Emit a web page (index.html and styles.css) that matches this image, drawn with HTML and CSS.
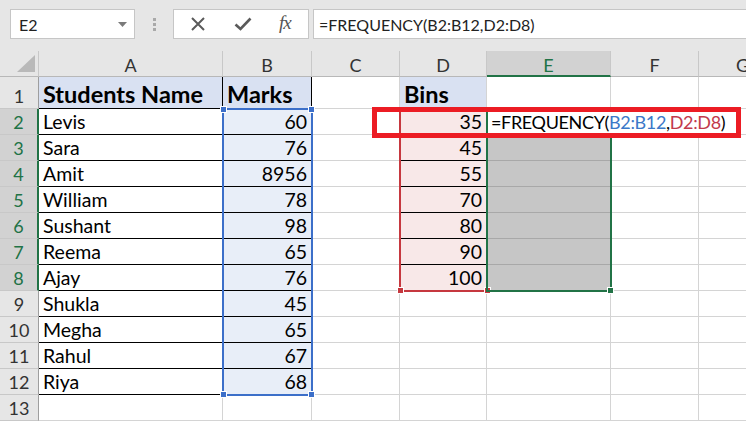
FILE: index.html
```html
<!DOCTYPE html>
<html>
<head>
<meta charset="utf-8">
<link rel="stylesheet" href="styles.css">
</head>
<body>
<div class="app">
  <div class="toolbar">
    <div class="namebox">
      <span class="nb-text">E2</span>
      <svg class="nb-arrow" width="9" height="5" viewBox="0 0 9 5"><path d="M0 0H9L4.5 5Z" fill="#7a7a7a"/></svg>
    </div>
    <div class="grip"><i></i><i></i><i></i></div>
    <div class="fxbox">
      <svg class="ico" width="16" height="16" viewBox="0 0 16 16"><path d="M2 2L14 14M14 2L2 14" stroke="#5a5a5a" stroke-width="2" fill="none"/></svg>
      <svg class="ico" width="18" height="14" viewBox="0 0 18 14"><path d="M1.5 7.5L6.5 12L16.5 1.5" stroke="#5a5a5a" stroke-width="2.6" fill="none"/></svg>
      <span class="fx">fx</span>
    </div>
    <div class="formula">=FREQUENCY(B2:B12,D2:D8)</div>
  </div>

  <div class="sheet">
    <div class="grid">
      <!-- header row -->
      <div class="corner"><svg width="18" height="17" viewBox="0 0 18 17"><path d="M18 0V17H0Z" fill="#b9b9b9"/></svg></div>
      <div class="ch">A</div>
      <div class="ch">B</div>
      <div class="ch">C</div>
      <div class="ch">D</div>
      <div class="ch sel">E</div>
      <div class="ch">F</div>
      <div class="ch">G</div>

      <!-- row 1 -->
      <div class="rh">1</div>
      <div class="c t hd">Students Name</div>
      <div class="c t hd">Marks</div>
      <div class="c"></div>
      <div class="c hd">Bins</div>
      <div class="c"></div>
      <div class="c"></div>
      <div class="c"></div>

      <!-- row 2 -->
      <div class="rh sel">2</div>
      <div class="c t">Levis</div>
      <div class="c t bb n">60</div>
      <div class="c"></div>
      <div class="c t rr n">35</div>
      <div class="c edit"><span class="edit-text">=FREQUENCY(<span class="ref-b">B2:B12</span>,<span class="ref-d">D2:D8</span>)</span><span class="caret"></span></div>
      <div class="c nogrid"></div>
      <div class="c"></div>

      <!-- row 3 -->
      <div class="rh sel">3</div>
      <div class="c t">Sara</div>
      <div class="c t bb n">76</div>
      <div class="c"></div>
      <div class="c t rr n">45</div>
      <div class="c gs"></div>
      <div class="c"></div>
      <div class="c"></div>

      <!-- row 4 -->
      <div class="rh sel">4</div>
      <div class="c t">Amit</div>
      <div class="c t bb n">8956</div>
      <div class="c"></div>
      <div class="c t rr n">55</div>
      <div class="c gs"></div>
      <div class="c"></div>
      <div class="c"></div>

      <!-- row 5 -->
      <div class="rh sel">5</div>
      <div class="c t">William</div>
      <div class="c t bb n">78</div>
      <div class="c"></div>
      <div class="c t rr n">70</div>
      <div class="c gs"></div>
      <div class="c"></div>
      <div class="c"></div>

      <!-- row 6 -->
      <div class="rh sel">6</div>
      <div class="c t">Sushant</div>
      <div class="c t bb n">98</div>
      <div class="c"></div>
      <div class="c t rr n">80</div>
      <div class="c gs"></div>
      <div class="c"></div>
      <div class="c"></div>

      <!-- row 7 -->
      <div class="rh sel">7</div>
      <div class="c t">Reema</div>
      <div class="c t bb n">65</div>
      <div class="c"></div>
      <div class="c t rr n">90</div>
      <div class="c gs"></div>
      <div class="c"></div>
      <div class="c"></div>

      <!-- row 8 -->
      <div class="rh sel">8</div>
      <div class="c t">Ajay</div>
      <div class="c t bb n">76</div>
      <div class="c"></div>
      <div class="c t rr n">100</div>
      <div class="c gs"></div>
      <div class="c"></div>
      <div class="c"></div>

      <!-- row 9 -->
      <div class="rh">9</div>
      <div class="c t">Shukla</div>
      <div class="c t bb n">45</div>
      <div class="c"></div>
      <div class="c"></div>
      <div class="c"></div>
      <div class="c"></div>
      <div class="c"></div>

      <!-- row 10 -->
      <div class="rh">10</div>
      <div class="c t">Megha</div>
      <div class="c t bb n">65</div>
      <div class="c"></div>
      <div class="c"></div>
      <div class="c"></div>
      <div class="c"></div>
      <div class="c"></div>

      <!-- row 11 -->
      <div class="rh">11</div>
      <div class="c t">Rahul</div>
      <div class="c t bb n">67</div>
      <div class="c"></div>
      <div class="c"></div>
      <div class="c"></div>
      <div class="c"></div>
      <div class="c"></div>

      <!-- row 12 -->
      <div class="rh">12</div>
      <div class="c t">Riya</div>
      <div class="c t bb n">68</div>
      <div class="c"></div>
      <div class="c"></div>
      <div class="c"></div>
      <div class="c"></div>
      <div class="c"></div>

      <!-- row 13 -->
      <div class="rh">13</div>
      <div class="c"></div>
      <div class="c"></div>
      <div class="c"></div>
      <div class="c"></div>
      <div class="c"></div>
      <div class="c"></div>
      <div class="c"></div>
    </div>

    <!-- range highlight overlays -->
    <div class="range range-blue">
      <i class="h tl"></i><i class="h tr"></i><i class="h bl"></i><i class="h br"></i>
    </div>
    <div class="range range-red">
      <i class="h bl"></i><i class="h br"></i>
    </div>
    <div class="range range-green">
      <i class="h br"></i>
    </div>
    <div class="callout"></div>
  </div>
</div>
</body>
</html>
```

FILE: styles.css
```css
* { box-sizing: border-box; }

html, body {
  margin: 0;
  padding: 0;
  background: #ffffff;
}

body {
  width: 746px;
  height: 422px;
  overflow: hidden;
  font-family: "Lato", "Open Sans", sans-serif;
  color: #000;
}

.app {
  width: 746px;
  height: 422px;
  display: flex;
  flex-direction: column;
  overflow: hidden;
}

/* ---------- toolbar ---------- */
.toolbar {
  height: 51px;
  flex: none;
  background: #e6e6e6;
  display: flex;
  align-items: flex-start;
  padding-top: 9px;
  padding-left: 10px;
}

.namebox {
  width: 125px;
  height: 30px;
  background: #fff;
  border: 1px solid #c6c6c6;
  display: flex;
  align-items: center;
  justify-content: space-between;
  padding: 0 7px 0 8px;
}

.nb-text {
  font-size: 16px;
  color: #222;
}

.grip {
  width: 38px;
  height: 30px;
  display: flex;
  flex-direction: column;
  align-items: center;
  justify-content: center;
  gap: 2px;
}
.grip i {
  display: block;
  width: 3px;
  height: 3px;
  background: #a9a9a9;
}

.fxbox {
  width: 136px;
  height: 30px;
  background: #fff;
  border: 1px solid #c6c6c6;
  display: flex;
  align-items: center;
  padding-left: 16px;
}
.fxbox .ico:first-child { margin-right: 28px; }
.fxbox .ico:nth-child(2) { margin-right: 27px; }

.fx {
  font-family: "Liberation Serif", serif;
  font-style: italic;
  font-size: 19px;
  color: #555;
  letter-spacing: -1px;
  margin-top: -3px;
}

.formula {
  margin-left: 4px;
  flex: 1;
  height: 30px;
  background: #fff;
  border: 1px solid #c6c6c6;
  border-right: none;
  padding-left: 5px;
  display: flex;
  align-items: center;
  font-size: 16px;
  color: #222;
}

/* ---------- sheet ---------- */
.sheet {
  position: relative;
  flex: 1;
  overflow: hidden;
}

.grid {
  display: grid;
  grid-template-columns: 39px 184px 89px 88px 87px 124px 88px 88px;
  grid-template-rows: 26px 32px repeat(12, 26px);
  width: 787px;
}

.corner {
  background: #e6e6e6;
  border-right: 1px solid #c8c8c8;
  border-bottom: 1px solid #b8b8b8;
  display: flex;
  align-items: flex-end;
  justify-content: flex-end;
  padding: 0 3px 4px 0;
}

.ch {
  background: #e6e6e6;
  border-right: 1px solid #c8c8c8;
  border-bottom: 1px solid #b8b8b8;
  display: flex;
  align-items: center;
  justify-content: center;
  font-size: 18px;
  color: #333;
  padding-top: 3px;
}
.ch.sel {
  background: #d2d2d2;
  color: #217346;
  border-bottom: 2px solid #217346;
}

.rh {
  background: #e6e6e6;
  border-right: 1px solid #9e9e9e;
  border-bottom: 1px solid #c8c8c8;
  display: flex;
  align-items: flex-end;
  justify-content: center;
  font-size: 18px;
  color: #333;
  padding-bottom: 1px;
}
.rh.sel {
  background: #d2d2d2;
  color: #217346;
  border-right: 2px solid #217346;
}

.c {
  border-right: 1px solid #d4d4d4;
  border-bottom: 1px solid #d4d4d4;
  display: flex;
  align-items: flex-end;
  padding: 0 4px 1px 4px;
  font-size: 19.5px;
  white-space: nowrap;
  line-height: 22px;
}

.t {
  border-right-color: #000;
  border-bottom-color: #000;
}
.hd {
  background: #d9e1f2;
  font-weight: 700;
  font-size: 23.5px;
  line-height: 28px;
  padding-bottom: 0;
}
.bb { background: #e8eef8; }
.rr { background: #f8e8e8; }
.gs {
  background: #c6c6c6;
  border-bottom-color: #a8a8a8;
  border-right-color: #a8a8a8;
}
.n { justify-content: flex-end; }
.nogrid { border-right-color: #fff; }

.edit {
  position: relative;
  overflow: visible;
  border-right-color: #fff;
  z-index: 2;
  font-size: 18px;
}
.edit-text {
  position: relative;
  background: #fff;
  padding-right: 3px;
  letter-spacing: -0.35px;
}
.ref-b { color: #3b78c8; }
.ref-d { color: #c23a4c; }
.caret {
  display: inline-block;
  width: 1px;
  height: 20px;
  background: #000;
  margin-bottom: 1px;
}

/* ---------- overlays ---------- */
.range {
  position: absolute;
  border: 2px solid;
  pointer-events: none;
}
.range-blue {
  left: 222px;
  top: 57px;
  width: 91px;
  height: 288px;
  border-color: #3c6fc9;
}
.range-red {
  left: 399px;
  top: 57px;
  width: 89px;
  height: 184px;
  border-color: #c6383f;
  border-right: none;
}
.range-green {
  left: 486px;
  top: 57px;
  width: 126px;
  height: 184px;
  border-color: #217346;
}
.h {
  position: absolute;
  width: 7px;
  height: 7px;
  border: 1px solid #fff;
}
.range-blue .h { background: #3c6fc9; }
.range-red .h { background: #c6383f; }
.range-green .h { background: #217346; }
.h.tl { left: -4px; top: -4px; }
.h.tr { right: -4px; top: -4px; }
.h.bl { left: -4px; bottom: -4px; }
.h.br { right: -4px; bottom: -4px; }
.range-red .h.br { right: -3px; }

.callout {
  position: absolute;
  left: 372px;
  top: 56px;
  width: 369px;
  height: 31px;
  border: 5px solid #ec1c24;
  z-index: 5;
}
```
